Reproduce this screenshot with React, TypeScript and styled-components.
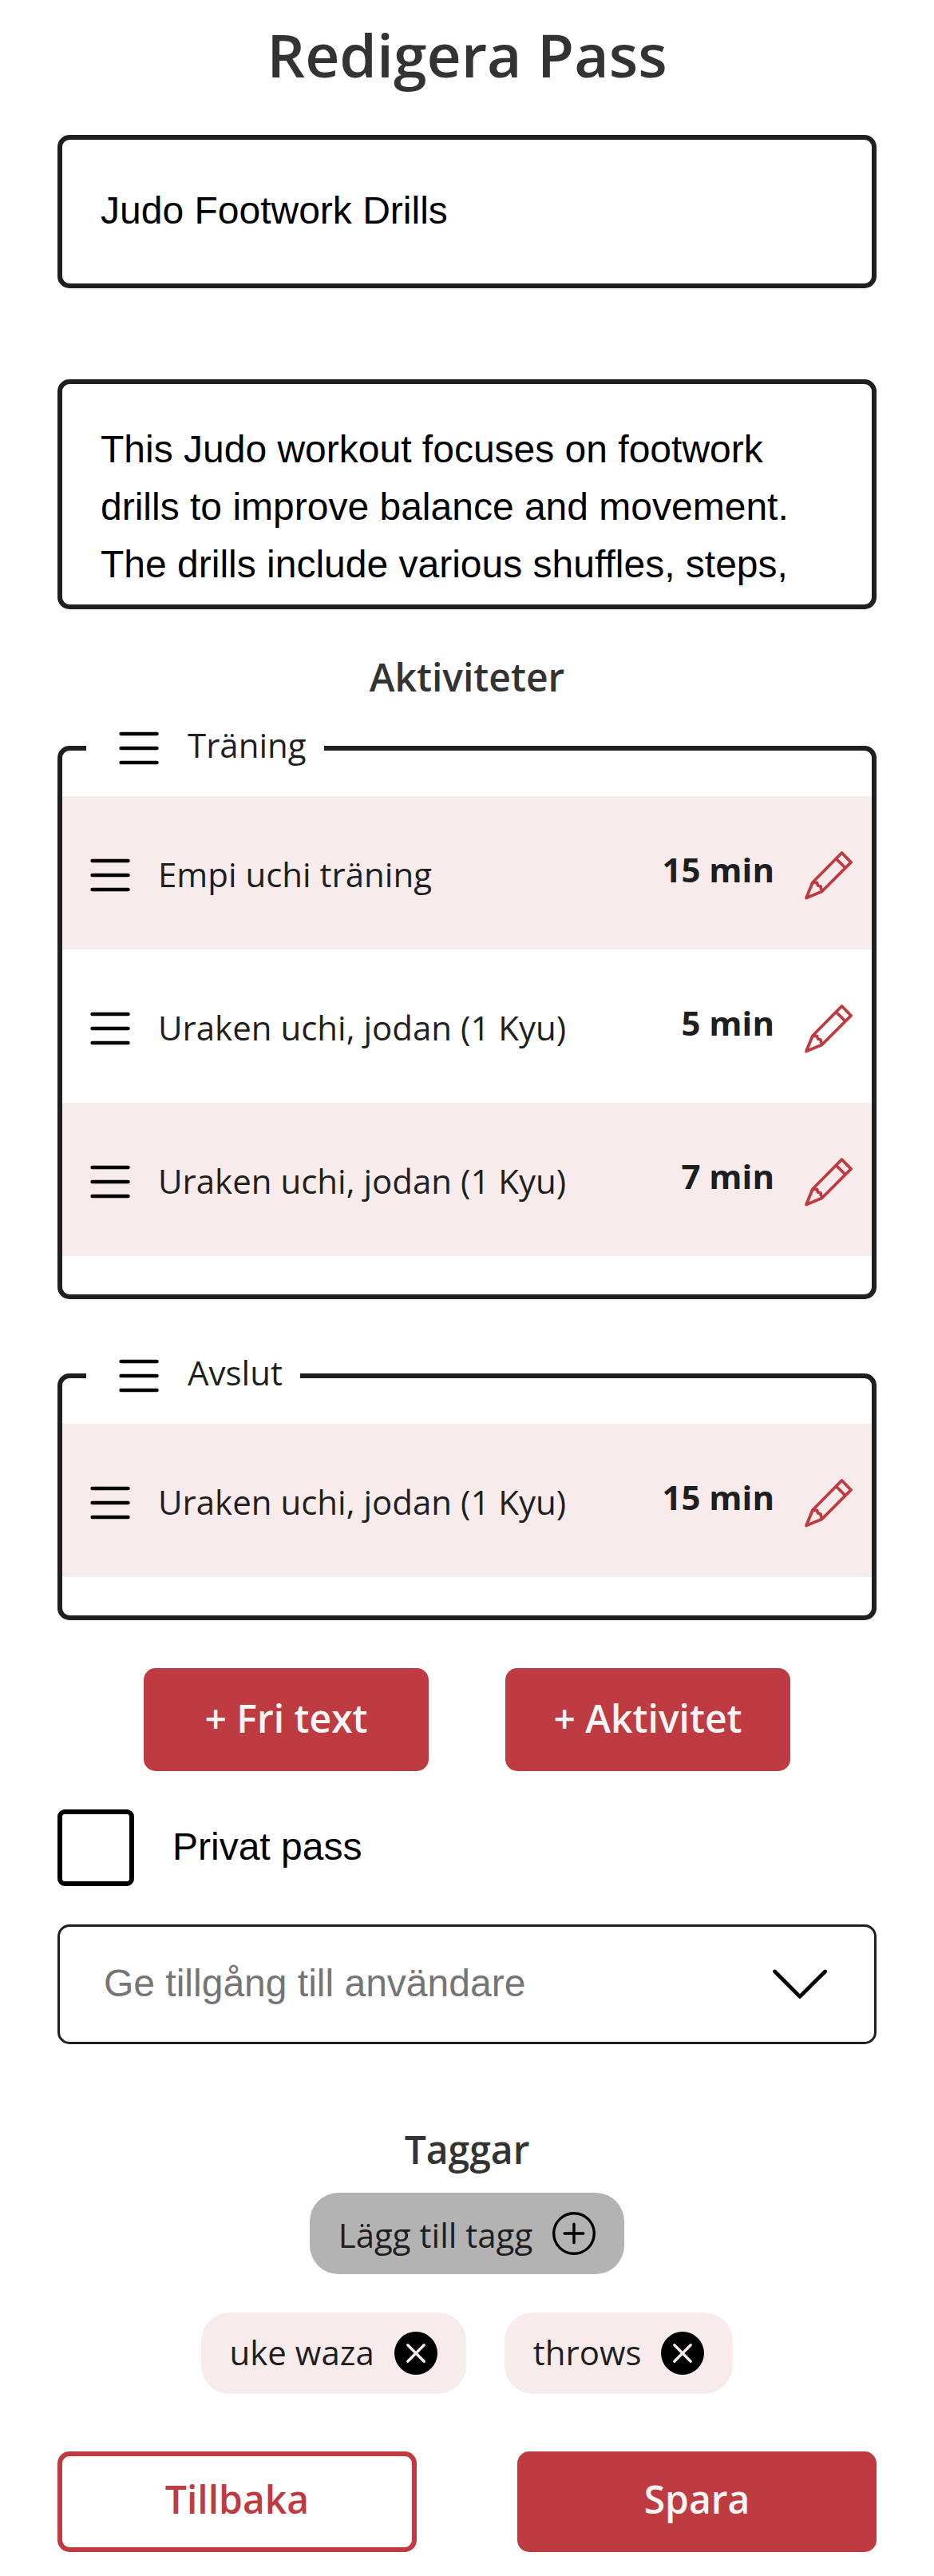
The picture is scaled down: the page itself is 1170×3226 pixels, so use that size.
import React from "react";
import styled, { createGlobalStyle } from "styled-components";

const GlobalStyle = createGlobalStyle`
  * { box-sizing: border-box; }
  body { margin: 0; background: #fff; }
`;

const ink = "#1f1f1f";
const red = "#be3b41";
const pink = "#f7ebeb";
const openSans = `"Open Sans", sans-serif`;
const arial = `"Liberation Sans", Arial, sans-serif`;

const Page = styled.main`
  width: 1170px;
  height: 3226px;
  padding: 0 72px;
  display: flex;
  flex-direction: column;
  font-family: ${openSans};
  color: ${ink};
`;

const Title = styled.h1`
  margin: 13px 0 0;
  font-size: 75px;
  font-weight: 600;
  line-height: 110px;
  color: #333;
  text-align: center;
`;

const NameInput = styled.input`
  margin-top: 46px;
  height: 192px;
  width: 100%;
  padding: 0 48px 3px;
  border: 6px solid ${ink};
  border-radius: 15px;
  background: #fff;
  font: 48px ${arial};
  color: #000;
  outline: none;
`;

const Description = styled.textarea`
  margin-top: 114px;
  height: 288px;
  width: 100%;
  padding: 46px 48px 0;
  border: 6px solid ${ink};
  border-radius: 15px;
  font: 48px/72px ${arial};
  color: #000;
  resize: none;
  outline: none;
  overflow: hidden;
`;

const SectionTitle = styled.h2<{ $top: number }>`
  margin: ${(p) => p.$top}px 0 0;
  font-size: 48px;
  font-weight: 600;
  line-height: 66px;
  color: #333;
  text-align: center;
`;

const Category = styled.section<{ $top: number }>`
  margin-top: ${(p) => p.$top}px;
  border: 6px solid ${ink};
  border-radius: 15px;
  padding-bottom: 48px;
`;

const Legend = styled.header`
  display: flex;
  align-items: center;
  width: fit-content;
  height: 60px;
  margin: -33px 0 30px 30px;
  padding: 0 22px 0 41px;
  gap: 34px;
  background: #fff;
  font-size: 42px;
`;

const LegendText = styled.span`
  line-height: 60px;
  margin-top: -8px;
`;

const Row = styled.div<{ $tinted: boolean }>`
  display: flex;
  align-items: center;
  height: 192px;
  padding: 6px 23px 0 35px;
  background: ${(p) => (p.$tinted ? pink : "#fff")};
  font-size: 42px;
`;

const RowName = styled.span`
  flex: 1;
  margin: -3px 0 0 33px;
`;

const Minutes = styled.span`
  margin: -16px 37px 0 0;
  font-weight: 700;
`;

const ButtonRow = styled.div<{ $top: number; $gap: number }>`
  display: flex;
  justify-content: center;
  gap: ${(p) => p.$gap}px;
  margin-top: ${(p) => p.$top}px;
`;

const Button = styled.button<{ $width: number; $height: number; $outlined?: boolean }>`
  width: ${(p) => p.$width}px;
  height: ${(p) => p.$height}px;
  padding: 0 0 ${(p) => (p.$height > 126 ? 5 : 7)}px;
  border: 6px solid ${red};
  border-radius: 15px;
  background: ${(p) => (p.$outlined ? "#fff" : red)};
  color: ${(p) => (p.$outlined ? red : "#f5f5f5")};
  font: 600 48px ${openSans};
`;

const CheckLabel = styled.label`
  display: flex;
  align-items: center;
  gap: 48px;
  margin-top: 48px;
  height: 96px;
  font: 48px ${arial};
  color: #000;
`;

const CheckBox = styled.input`
  appearance: none;
  width: 96px;
  height: 96px;
  margin: 0;
  border: 6px solid #000;
  border-radius: 9px;
`;

const CheckText = styled.span`
  margin-top: -4px;
`;

const Select = styled.div`
  display: flex;
  align-items: center;
  justify-content: space-between;
  margin-top: 48px;
  height: 150px;
  padding: 0 57px 0 55px;
  border: 3px solid ${ink};
  border-radius: 15px;
  font: 48px ${arial};
  color: #757575;
`;

const SelectText = styled.span`
  margin-top: -4px;
`;

const TagRow = styled.div<{ $top: number }>`
  display: flex;
  justify-content: center;
  gap: 48px;
  margin-top: ${(p) => p.$top}px;
`;

const Tag = styled.div<{ $add?: boolean }>`
  display: flex;
  align-items: center;
  gap: 25px;
  height: 102px;
  padding: 0 36px;
  border-radius: 36px;
  background: ${(p) => (p.$add ? "#b3b3b3" : pink)};
  font-size: 42px;
`;

const TagText = styled.span<{ $shift: number }>`
  margin-top: ${(p) => p.$shift}px;
`;

const Svg = styled.svg`
  display: block;
  flex: none;
`;

const Handle = () => (
  <Svg width="52" height="42" viewBox="0 0 52 42" stroke="#000" strokeWidth="4.5" strokeLinecap="round">
    <path d="M2.6 3H47.5M2.6 21H47.5M2.6 39H47.5" />
  </Svg>
);

const Pencil = () => (
  <Svg width="62" height="62" viewBox="0 0 62 62" fill="none" stroke={red} strokeWidth="3.8" strokeLinejoin="round">
    <path d="M47.5 3L59 14.8L22.5 51.5L3 59.5L11 40Z" />
    <path d="M40 10L51.5 21.5" />
    <path d="M11 40L16.5 40.5L17.5 44L21 45L21.5 48L23.5 51" />
  </Svg>
);

const Chevron = () => (
  <Svg width="72" height="42" viewBox="0 0 72 42" fill="none" stroke="#000" strokeWidth="4.8" strokeLinecap="round" strokeLinejoin="round">
    <path d="M4.6 5L36 36.4L67.6 5" />
  </Svg>
);

const Plus = () => (
  <Svg width="54" height="54" viewBox="0 0 54 54" fill="none" stroke="#000" strokeWidth="3.4" strokeLinecap="round">
    <circle cx="27" cy="27" r="25.3" />
    <path d="M27 15.2V38.8M15.2 27H38.8" />
  </Svg>
);

const Remove = () => (
  <Svg width="54" height="54" viewBox="0 0 54 54">
    <circle cx="27" cy="27" r="27" />
    <path d="M16.8 16.8L37.2 37.2M37.2 16.8L16.8 37.2" stroke={pink} strokeWidth="3.4" strokeLinecap="round" />
  </Svg>
);

const categories = [
  {
    name: "Träning",
    top: 53,
    items: [
      { name: "Empi uchi träning", minutes: 15 },
      { name: "Uraken uchi, jodan (1 Kyu)", minutes: 5 },
      { name: "Uraken uchi, jodan (1 Kyu)", minutes: 7 },
    ],
  },
  { name: "Avslut", top: 93, items: [{ name: "Uraken uchi, jodan (1 Kyu)", minutes: 15 }] },
];

export default function App() {
  return (
    <>
      <GlobalStyle />
      <Page>
        <Title>Redigera Pass</Title>
        <NameInput defaultValue="Judo Footwork Drills" />
        <Description defaultValue="This Judo workout focuses on footwork drills to improve balance and movement. The drills include various shuffles, steps," />
        <SectionTitle $top={52}>Aktiviteter</SectionTitle>
        {categories.map((c) => (
          <Category key={c.name} $top={c.top}>
            <Legend>
              <Handle />
              <LegendText>{c.name}</LegendText>
            </Legend>
            {c.items.map((item, i) => (
              <Row key={i} $tinted={i % 2 === 0}>
                <Handle />
                <RowName>{item.name}</RowName>
                <Minutes>{item.minutes} min</Minutes>
                <Pencil />
              </Row>
            ))}
          </Category>
        ))}
        <ButtonRow $top={60} $gap={96}>
          <Button $width={357} $height={129}>+ Fri text</Button>
          <Button $width={357} $height={129}>+ Aktivitet</Button>
        </ButtonRow>
        <CheckLabel>
          <CheckBox type="checkbox" />
          <CheckText>Privat pass</CheckText>
        </CheckLabel>
        <Select>
          <SelectText>Ge tillgång till användare</SelectText>
          <Chevron />
        </Select>
        <SectionTitle $top={99}>Taggar</SectionTitle>
        <TagRow $top={21}>
          <Tag $add>
            <TagText $shift={3}>Lägg till tagg</TagText>
            <Plus />
          </Tag>
        </TagRow>
        <TagRow $top={48}>
          <Tag>
            <TagText $shift={-3}>uke waza</TagText>
            <Remove />
          </Tag>
          <Tag>
            <TagText $shift={-3}>throws</TagText>
            <Remove />
          </Tag>
        </TagRow>
        <ButtonRow $top={72} $gap={126}>
          <Button $width={450} $height={126} $outlined>Tillbaka</Button>
          <Button $width={450} $height={126}>Spara</Button>
        </ButtonRow>
      </Page>
    </>
  );
}
